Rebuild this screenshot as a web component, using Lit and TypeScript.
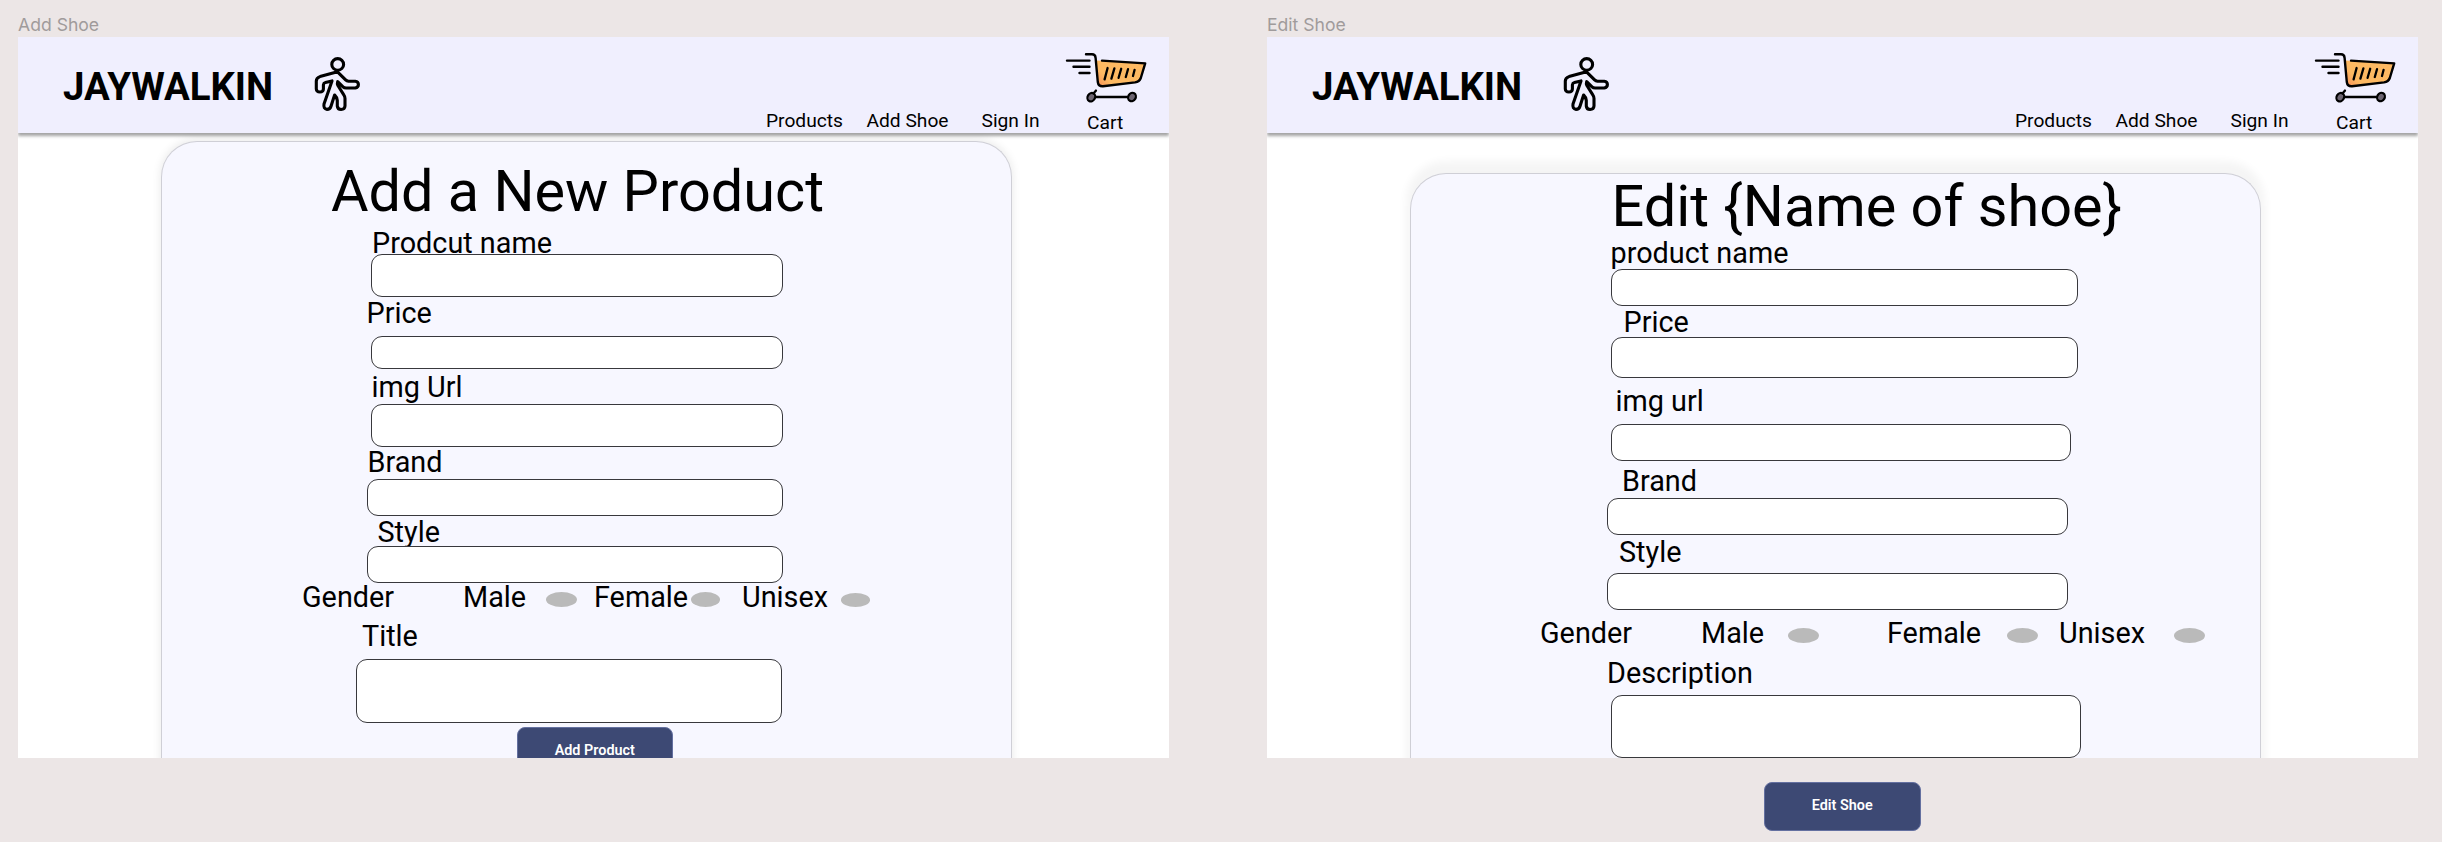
import { LitElement, html, css, svg } from "lit";
import { customElement, property } from "lit/decorators.js";

const formStyles = css`
  :host {
    display: block;
    font-family: Roboto, "Liberation Sans", sans-serif;
    color: #000;
  }
  .card {
    box-sizing: border-box;
    width: 851px;
    border: 1px solid #cfcfd6;
    border-bottom: 0;
    border-radius: 36px 36px 0 0;
    background: #f7f7ff;
    display: grid;
    align-content: start;
    justify-items: start;
    align-items: start;
  }
  .title {
    margin: 0;
    font-size: 57.6px;
    line-height: 68px;
    font-weight: 400;
    white-space: nowrap;
  }
  .label {
    font-size: 28.8px;
    line-height: 34px;
    white-space: nowrap;
  }
  .field {
    box-sizing: border-box;
    border: 1px solid #38383c;
    border-radius: 11px;
    background: #fff;
  }
  .gender {
    display: grid;
    align-items: start;
  }
  .dot {
    width: 31px;
    height: 15px;
    border-radius: 50%;
    background: #bababa;
  }
  .button {
    box-sizing: border-box;
    width: 156.5px;
    height: 49px;
    padding-bottom: 2px;
    border: 1px solid #6470a0;
    border-radius: 8px;
    background: #3d4974;
    color: #fff;
    font-size: 14.4px;
    font-weight: 600;
    display: flex;
    align-items: center;
    justify-content: center;
  }
`;

@customElement("walker-icon")
class WalkerIcon extends LitElement {
  static styles = css`
    :host { display: block; }
    svg { display: block; width: 48px; height: 58px; }
  `;
  render() {
    return html`<svg viewBox="0 0 48 58" fill="none" stroke="#000" stroke-width="3.1" stroke-linejoin="round" stroke-linecap="round">
      <ellipse cx="24.7" cy="9.4" rx="5.9" ry="5.8" />
      <path d="M24.5 16.8 L7 21.6 Q3.3 22.8 3.3 26 V34 Q3.5 37 6.9 37 Q10.3 37 10.4 34 V29.8 Q10.6 28 12.4 27.6 L19 25.9 L11 49 Q10.2 54 14 54.4 Q17 54.4 18 51.2 L21.6 40 Q23.8 42 24.3 45.5 V51 Q24.6 54.5 28.1 54.5 Q31.8 54.4 32 51 V43.5 Q32 41.5 30.8 39.8 L24.9 30.5 Q24 28.6 24.7 26.6 L30 31.8 Q31.2 33 33.2 33 H42.3 Q45.4 32.4 45.4 29.5 Q45.4 26.5 42.3 26.2 H35.5 Q33.8 26.1 32.6 24.9 Z" />
    </svg>`;
  }
}

@customElement("cart-icon")
class CartIcon extends LitElement {
  static styles = css`
    :host { display: block; }
    svg { display: block; width: 84px; height: 54px; }
  `;
  render() {
    return html`<svg viewBox="0 0 84 54" fill="none" stroke="#000" stroke-linecap="round" stroke-linejoin="round">
      <defs>
        <linearGradient id="basket" gradientUnits="userSpaceOnUse" x1="34" y1="31" x2="41" y2="25">
          <stop offset="0" stop-color="#f99a5a" />
          <stop offset="1" stop-color="#fdb962" />
        </linearGradient>
      </defs>
      <path d="M32.5 9.5 L81 11.5 L77 27 Q76 30.5 72 31 L39 35 Q35 35.2 34.3 31.5 Z" fill="url(#basket)" stroke="none" />
      <path d="M22 3.3 H28 Q31.3 3.3 31.6 6.8 L33.8 31 Q34.4 35.6 39 35.3 L71 31.4 Q75.5 30.6 76.8 27 L81.2 12.4 L38 9.6" stroke-width="2.4" />
      <path d="M3 9.6 H25.5 M9.5 15.8 H25.5 M15.5 22 H25.5" stroke-width="2.4" />
      ${svg`<path d="M43.6 17 L40.6 28.4 M50.4 17.4 L47.4 27.6 M57.2 17.8 L54.6 26.8 M64 18.2 L61.8 26 M70.6 18.8 L69 25" stroke-width="2.3" />`}
      <path d="M32 46 H64" stroke-width="2.4" />
      <ellipse cx="27.3" cy="46.2" rx="3.7" ry="4.4" transform="rotate(30 27.3 46.2)" fill="#6c6470" stroke-width="2.2" />
      <ellipse cx="68" cy="46" rx="3.7" ry="4.4" transform="rotate(30 68 46)" fill="#6c6470" stroke-width="2.2" />
      <path d="M29.5 42.5 L32 39.5" stroke-width="2.2" />
    </svg>`;
  }
}

@customElement("site-header")
class SiteHeader extends LitElement {
  static styles = css`
    :host {
      display: block;
      position: relative;
      z-index: 1;
      font-family: Roboto, "Liberation Sans", sans-serif;
      color: #000;
    }
    .bar {
      box-sizing: border-box;
      height: 95.5px;
      padding-left: 45px;
      background: #f0effe;
      box-shadow: 0 3px 3px rgba(0, 0, 0, 0.36);
      clip-path: inset(0 0 -10px 0);
      display: flex;
      align-items: flex-start;
    }
    .logo {
      width: 250px;
      padding-top: 27px;
      font-size: 38.4px;
      line-height: 46px;
      font-weight: 700;
      letter-spacing: -0.05px;
      white-space: nowrap;
    }
    .walker { margin-top: 18px; width: 48px; }
    .nav {
      margin-left: 405px;
      padding-top: 73px;
      display: grid;
      grid-template-columns: 100.5px 115px 82.5px;
      font-size: 19.2px;
      line-height: 22px;
      white-space: nowrap;
    }
    .cart { padding-top: 14px; }
    .caption {
      margin: 6.5px 0 0 23px;
      font-size: 19.2px;
      line-height: 22px;
    }
  `;
  render() {
    return html`<header class="bar">
      <div class="logo">JAYWALKIN</div>
      <walker-icon class="walker"></walker-icon>
      <nav class="nav"><span>Products</span><span>Add Shoe</span><span>Sign In</span></nav>
      <div class="cart">
        <cart-icon></cart-icon>
        <div class="caption">Cart</div>
      </div>
    </header>`;
  }
}

@customElement("add-shoe-form")
class AddShoeForm extends LitElement {
  static styles = [
    formStyles,
    css`
      .card {
        height: 640px;
        margin: 8.5px 0 0 142.5px;
        padding-top: 15px;
        box-shadow: 0 -1px 8px 1px rgba(0, 0, 0, 0.08);
        grid-template-rows: 69px 27.6px 42.2px 40.2px 34px 34px 41px 33.8px 36.3px 31px 33.5px 39.5px 39.7px 68.2px 49px;
      }
      .title { margin: 1px 0 0 169.5px; }
      .name { margin-left: 210.5px; }
      .price { margin-left: 205px; }
      .img { margin-left: 210px; }
      .brand { margin-left: 206px; }
      .style { margin-left: 216px; }
      .heading { margin-left: 200.5px; }
      .field { margin-left: 209px; width: 412px; }
      .field.wide { margin-left: 205px; width: 416px; }
      .field.widest { margin-left: 194.6px; width: 426.4px; height: 64.5px; }
      .h43 { height: 43px; }
      .h33 { height: 33px; }
      .h37 { height: 37.3px; }
      .gender {
        margin-left: 140.5px;
        grid-template-columns: 161px 83px 48px 96.5px 51.5px 99px 30px;
      }
      .dot { margin-top: 12px; }
      .dot.small { width: 29px; }
      .dot.low { margin-top: 13.5px; height: 13.5px; }
      .button { margin-left: 355px; }
    `,
  ];
  render() {
    return html`<form class="card">
      <h1 class="title">Add a New Product</h1>
      <label class="label name">Prodcut name</label>
      <div class="field h43"></div>
      <label class="label price">Price</label>
      <div class="field h33"></div>
      <label class="label img">img Url</label>
      <div class="field h43"></div>
      <label class="label brand">Brand</label>
      <div class="field wide h37"></div>
      <label class="label style">Style</label>
      <div class="field wide h37"></div>
      <div class="gender">
        <span class="label">Gender</span>
        <span class="label">Male</span><span class="dot"></span>
        <span class="label">Female</span><span class="dot small"></span>
        <span class="label">Unisex</span><span class="dot small low"></span>
      </div>
      <label class="label heading">Title</label>
      <div class="field widest"></div>
      <div class="button">Add Product</div>
    </form>`;
  }
}

@customElement("edit-shoe-form")
class EditShoeForm extends LitElement {
  static styles = [
    formStyles,
    css`
      .card {
        height: 640px;
        margin: 40.3px 0 0 142.5px;
        box-shadow: 0 -8px 8px 4px rgba(0, 0, 0, 0.045);
        grid-template-rows: 61.9px 33.2px 36.2px 31.6px 47.8px 39.6px 40.4px 33.4px 37px 38.2px 43px 39.6px 39.5px 63px;
      }
      .title { margin: -0.5px 0 0 201px; }
      .name { margin-left: 200px; }
      .price { margin-left: 213px; }
      .img { margin-left: 205px; }
      .brand { margin-left: 211.5px; }
      .style { margin-left: 208.5px; }
      .heading { margin-left: 196.5px; }
      .field { margin-left: 200px; }
      .w467 { width: 467px; }
      .w460 { width: 460.5px; }
      .w470 { width: 470.5px; height: 62.5px; }
      .field.left { margin-left: 196.5px; }
      .h37 { height: 37px; }
      .h41 { height: 41px; }
      .gender {
        margin-left: 129.5px;
        grid-template-columns: 161px 86.5px 99.5px 120px 52px 115px 31px;
      }
      .dot { margin-top: 12px; }
    `,
  ];
  render() {
    return html`<form class="card">
      <h1 class="title">Edit {Name of shoe}</h1>
      <label class="label name">product name</label>
      <div class="field w467 h37"></div>
      <label class="label price">Price</label>
      <div class="field w467 h41"></div>
      <label class="label img">img url</label>
      <div class="field w460 h37"></div>
      <label class="label brand">Brand</label>
      <div class="field w460 left h37"></div>
      <label class="label style">Style</label>
      <div class="field w460 left h37"></div>
      <div class="gender">
        <span class="label">Gender</span>
        <span class="label">Male</span><span class="dot"></span>
        <span class="label">Female</span><span class="dot"></span>
        <span class="label">Unisex</span><span class="dot"></span>
      </div>
      <label class="label heading">Description</label>
      <div class="field w470"></div>
    </form>`;
  }
}

@customElement("art-board")
class ArtBoard extends LitElement {
  static styles = [
    formStyles,
    css`
      :host { display: block; width: 1151px; }
      .name {
        height: 37px;
        box-sizing: border-box;
        padding-top: 14px;
        font-family: Inter, sans-serif;
        font-size: 17.6px;
        line-height: 21px;
        color: #a09b9b;
      }
      .frame {
        height: 720.5px;
        overflow: hidden;
        background: #fff;
      }
      .below { padding: 24.5px 0 0 497px; }
    `,
  ];
  @property() name = "";
  render() {
    return html`<div class="name">${this.name}</div>
      <div class="frame">
        <site-header></site-header>
        <slot></slot>
      </div>
      ${this.name === "Edit Shoe" ? html`<div class="below"><div class="button">Edit Shoe</div></div>` : ""}`;
  }
}

@customElement("app-root")
class AppRoot extends LitElement {
  static styles = css`
    :host { display: block; }
    .canvas {
      box-sizing: border-box;
      width: 2442px;
      height: 842px;
      padding-left: 18px;
      overflow: hidden;
      background: #ece6e6;
      display: flex;
      gap: 98px;
    }
  `;
  render() {
    return html`<main class="canvas">
      <art-board name="Add Shoe"><add-shoe-form></add-shoe-form></art-board>
      <art-board name="Edit Shoe"><edit-shoe-form></edit-shoe-form></art-board>
    </main>`;
  }
}
